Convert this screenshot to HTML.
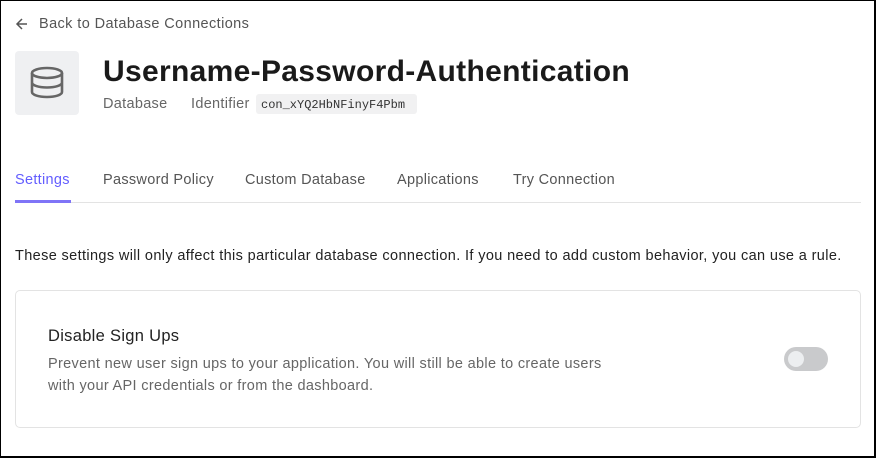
<!DOCTYPE html>
<html><head><style>
*{margin:0;padding:0;box-sizing:border-box}
html,body{width:876px;height:458px;overflow:hidden;background:#fff}
body{font-family:"Liberation Sans",sans-serif;position:relative}
.a{position:absolute;white-space:nowrap}
.t{font-size:14.5px;letter-spacing:0.3px}
</style></head><body>
<div class="a" style="left:0;top:0;width:876px;height:458px;border:1px solid #000;border-right-width:2px;border-bottom-width:2px"></div>
<svg class="a" style="left:15px;top:17px" width="14" height="14" viewBox="0 0 14 14"><path d="M12 7H2M7 2L2 7l5 5" fill="none" stroke="#555" stroke-width="1.5"/></svg>
<div class="a t" style="left:39px;top:16px;color:#555;letter-spacing:0.4px">Back to Database Connections</div>
<div class="a" style="left:15px;top:51px;width:64px;height:64px;background:#eff0f2;border-radius:4px"></div>
<svg class="a" style="left:29px;top:65px" width="36" height="36" viewBox="0 0 36 36" fill="none" stroke="#666" stroke-width="2.6"><ellipse cx="18" cy="8" rx="15" ry="5"/><path d="M3 8v19c0 2.8 6.7 5 15 5s15-2.2 15-5V8M3 17.5c0 2.8 6.7 5 15 5s15-2.2 15-5"/></svg>
<div class="a" style="left:103px;top:55px;font-size:30px;font-weight:bold;color:#1a1a1a;letter-spacing:0.32px">Username-Password-Authentication</div>
<div class="a t" style="left:103px;top:96px;color:#666">Database</div>
<div class="a t" style="left:191px;top:96px;color:#666">Identifier</div>
<div class="a" style="left:256px;top:94px;width:161px;height:20px;background:#f1f1f2;border-radius:3px;font-family:'Liberation Mono',monospace;font-size:12px;color:#333;padding:4px 0 0 5px">con_xYQ2HbNFinyF4Pbm</div>
<div class="a t" style="left:15px;top:172px;color:#635dff">Settings</div>
<div class="a t" style="left:103px;top:172px;color:#555">Password Policy</div>
<div class="a t" style="left:245px;top:172px;color:#555">Custom Database</div>
<div class="a t" style="left:397px;top:172px;color:#555">Applications</div>
<div class="a t" style="left:513px;top:172px;color:#555">Try Connection</div>
<div class="a" style="left:15px;top:202px;width:846px;height:1px;background:#e3e3e3"></div>
<div class="a" style="left:15px;top:200px;width:56px;height:3px;background:#7f74f7"></div>
<div class="a t" style="left:15px;top:248px;color:#222;letter-spacing:0.37px">These settings will only affect this particular database connection. If you need to add custom behavior, you can use a rule.</div>
<div class="a" style="left:15px;top:290px;width:846px;height:138px;border:1px solid #e3e3e3;border-radius:5px"></div>
<div class="a" style="left:48px;top:327px;font-size:16.5px;color:#222;letter-spacing:0.3px">Disable Sign Ups</div>
<div class="a t" style="left:48px;top:353px;color:#666;line-height:22px;letter-spacing:0.33px">Prevent new user sign ups to your application. You will still be able to create users<br>with your API credentials or from the dashboard.</div>
<div class="a" style="left:784px;top:347px;width:44px;height:24px;border-radius:12px;background:#c9cacc"></div>
<div class="a" style="left:788px;top:351px;width:16px;height:16px;border-radius:50%;background:#eceef0"></div>
</body></html>
